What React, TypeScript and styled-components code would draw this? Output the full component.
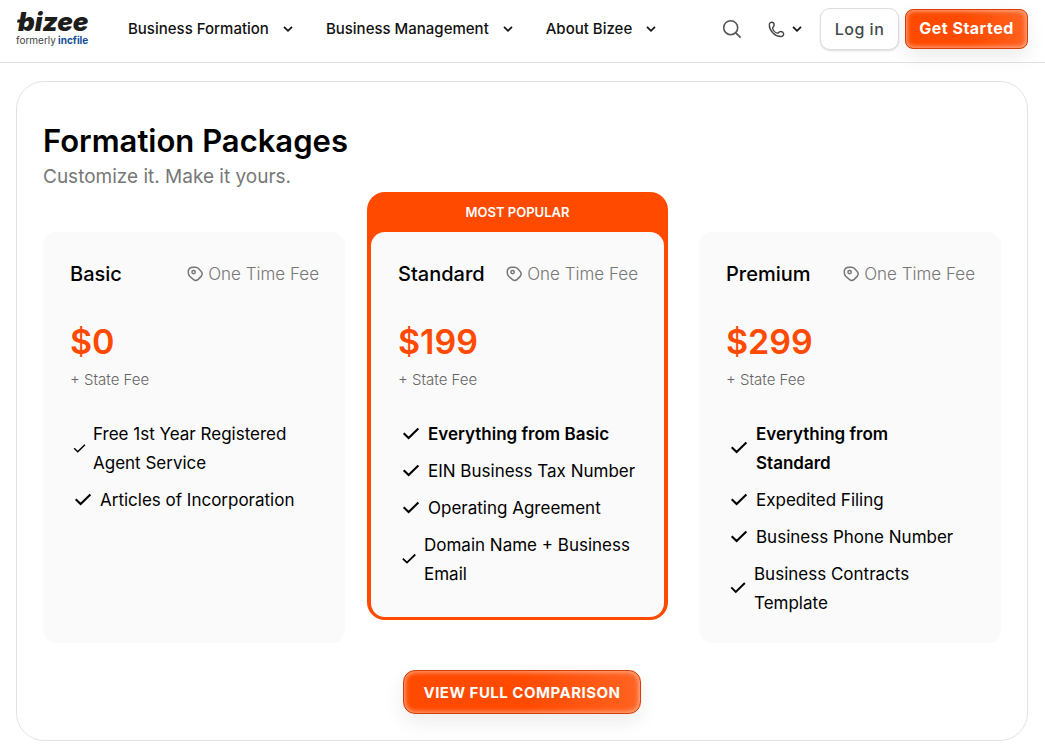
import React from "react";
import styled, { createGlobalStyle, css } from "styled-components";

const GlobalStyle = createGlobalStyle`
  * { box-sizing: border-box; }
  body {
    margin: 0;
    background: #fff;
    color: #000;
    font-family: Inter, "Liberation Sans", sans-serif;
  }
  button { font-family: inherit; cursor: pointer; }
  h1, h2, p, ul { margin: 0; padding: 0; }
`;

const Header = styled.header`
  display: flex;
  align-items: center;
  height: 63px;
  padding: 0 17px 4px 16px;
  border-bottom: 1px solid #e2e4e4;
`;

const LogoLink = styled.a`
  display: block;
  height: 40px;
  margin-right: 32px;
`;

const Nav = styled.nav`
  display: flex;
  gap: 33px;
  flex: 1;
`;

const NavButton = styled.button`
  display: flex;
  align-items: center;
  gap: 14px;
  padding: 0;
  border: 0;
  background: none;
  color: #111;
  font-size: 15px;
  font-weight: 500;
  line-height: 20px;
  white-space: nowrap;
`;

const Tools = styled.div`
  display: flex;
  align-items: center;
`;

const IconButton = styled.button<{ $gap: number }>`
  display: flex;
  align-items: center;
  gap: 7px;
  margin-right: ${(p) => p.$gap}px;
  padding: 0;
  border: 0;
  background: none;
  color: #444;
`;

const LoginButton = styled.button`
  width: 79px;
  height: 42px;
  margin-right: 6px;
  padding: 0;
  border: 1px solid #dcdfdf;
  border-radius: 10px;
  background: #fff;
  box-shadow: 0 1px 2px rgba(0, 0, 0, 0.15);
  color: #434a4a;
  font-size: 16px;
  font-weight: 500;
  letter-spacing: 0.5px;
`;

const PrimaryButton = styled.button<{ $large?: boolean }>`
  border: 1px solid #d63e05;
  border-radius: 8px;
  background: linear-gradient(75deg, #ff4a00 50%, #ff6424 100%);
  box-shadow:
    inset 0 0 5px 1px rgba(255, 255, 255, 0.55),
    0 8px 20px rgba(0, 0, 0, 0.08);
  color: #fff;
  font-weight: 700;
  letter-spacing: 0.5px;
  white-space: nowrap;
  ${(p) =>
    p.$large
      ? css`
          width: 238px;
          height: 44px;
          padding: 0;
          border-radius: 12px;
          font-size: 15px;
        `
      : css`
          width: 123px;
          height: 40px;
          padding: 0 0 2px;
          font-size: 16px;
        `}
`;

const Panel = styled.main`
  margin: 18px 17px 14px 16px;
  padding: 41px 26px 26px;
  border: 1px solid #e2e4e4;
  border-radius: 28px;
`;

const Title = styled.h1`
  font-size: 31px;
  font-weight: 600;
  line-height: 36px;
`;

const Subtitle = styled.p`
  color: #777;
  font-size: 19px;
  line-height: 36px;
`;

const Plans = styled.div`
  display: grid;
  grid-template-columns: repeat(3, minmax(0, 1fr));
  gap: 26px;
  margin-top: 37px;
`;

const Plan = styled.section<{ $featured?: boolean }>`
  ${(p) =>
    p.$featured
      ? css`
          align-self: start;
          margin: -40px 5px 0 -4px;
          padding: 0 4px 3px;
          border-radius: 18px;
          background: #ff4a00;
        `
      : css`
          border-radius: 14px;
          background: #fafafa;
        `}
`;

const Ribbon = styled.p`
  color: #fff;
  font-size: 13px;
  font-weight: 600;
  line-height: 40px;
  text-align: center;
`;

const PlanBody = styled.div<{ $featured?: boolean }>`
  padding: 26px 26px ${(p) => (p.$featured ? 28 : 25)}px 27px;
  border-radius: 14px;
  background: #fafafa;
`;

const PlanHead = styled.div`
  display: flex;
  align-items: center;
  justify-content: space-between;
`;

const PlanName = styled.h2`
  font-size: 20px;
  font-weight: 500;
  line-height: 30px;
`;

const Fee = styled.p`
  display: flex;
  align-items: center;
  gap: 5px;
  color: #777;
  font-size: 17px;
  font-weight: 300;
  line-height: 32px;
  white-space: nowrap;
`;

const Price = styled.p`
  margin-top: 32px;
  color: #ff4a00;
  font-size: 34px;
  font-weight: 600;
  line-height: 40px;
`;

const StateFee = styled.p`
  margin-top: 6px;
  color: #666;
  font-size: 15px;
  font-weight: 300;
  line-height: 24px;
`;

const Features = styled.ul`
  display: flex;
  flex-direction: column;
  gap: 8px;
  max-width: 238px;
  margin-top: 28px;
  list-style: none;
`;

const Feature = styled.li<{ $bold?: boolean }>`
  display: flex;
  align-items: center;
  gap: 4px;
  font-size: 17px;
  font-weight: ${(p) => (p.$bold ? 600 : 400)};
  line-height: 29px;

  svg { flex: none; }
`;

const Actions = styled.div`
  display: flex;
  justify-content: center;
  margin-top: 27px;
`;

const Chevron = () => (
  <svg width="10" height="8" viewBox="0 0 10 8" fill="none" aria-hidden="true">
    <path d="M1 1.800l4 4 4-4" stroke="#111" strokeWidth="1.700" />
  </svg>
);

const SearchIcon = () => (
  <svg width="20" height="20" viewBox="0 0 20 20" fill="none" aria-hidden="true">
    <circle cx="8.7" cy="8.7" r="7" stroke="#555" strokeWidth="1.6" />
    <path d="M13.8 13.8l4.8 4.8" stroke="#555" strokeWidth="1.7" />
  </svg>
);

const PhoneIcon = () => (
  <svg width="17" height="17" viewBox="0 0 17 17" fill="none" aria-hidden="true">
    <path
      d="M1.4 3.2C1.6 1.8 3 1 4.2 1.3c1.3.3 2 2 1.9 3.3C6 5.7 4.5 6.1 4.7 7.3c.3 2 2.5 4.300 4.600 4.800 1.200.3 1.500-1.300 2.700-1.500 1.500-.2 3.300.7 3.600 2 .3 1.500-.8 2.700-2.200 2.900C7.500 16.200 .8 9.400 1.400 3.200z"
      stroke="#444"
      strokeWidth="1.4"
    />
  </svg>
);

const TagIcon = () => (
  <svg width="16" height="16" viewBox="0 0 16 16" fill="none" aria-hidden="true">
    <path
      d="M1.200 5.800C1.200 2.800 3.200 1.200 6 1.200h2.400c1.300 0 2.200.4 3.100 1.300l2.500 2.700c1.500 1.600 1.500 3.400.2 5.200l-3 3c-1.500 1.400-3.300 1.300-4.900 0L2.700 10.200C1.600 9.100 1.200 7.800 1.200 5.800z"
      stroke="#777"
      strokeWidth="1.5"
    />
    <circle cx="6.600" cy="6.100" r="1.700" stroke="#777" strokeWidth="1.5" />
  </svg>
);

const CheckIcon = ({ size }: { size: number }) => (
  <svg width={size} height={size} viewBox="0 0 26 26" fill="none" aria-hidden="true">
    <path d="M5.700 11.300l4.900 4.800L20.400 6.500" stroke="#000" strokeWidth="2.100" />
  </svg>
);

const Logo = () => (
  <svg width="80" height="40" viewBox="0 0 80 40" role="img" aria-label="bizee, formerly incfile">
    <text x="2" y="22" fontFamily="Inter, sans-serif" fontSize="26" fontWeight="900" fontStyle="italic" fill="#1d1d1b">
      bizee
    </text>
    <path d="M1.600 10.500h6l-.6 3H1z" fill="#1d1d1b" />
    <text x="0" y="35" fontFamily="Inter, sans-serif" fontSize="10" fill="#444">
      formerly
    </text>
    <text x="42" y="35" fontFamily="Inter, sans-serif" fontSize="10" fontWeight="700" fill="#124f97">
      incfile
    </text>
  </svg>
);

type FeatureItem = { text: string; bold?: boolean; check?: number };
type PlanData = { name: string; price: string; featured?: boolean; features: FeatureItem[] };

const plans: PlanData[] = [
  {
    name: "Basic",
    price: "$0",
    features: [
      { text: "Free 1st Year Registered Agent Service", check: 19 },
      { text: "Articles of Incorporation" },
    ],
  },
  {
    name: "Standard",
    price: "$199",
    featured: true,
    features: [
      { text: "Everything from Basic", bold: true },
      { text: "EIN Business Tax Number" },
      { text: "Operating Agreement" },
      { text: "Domain Name + Business Email", check: 22 },
    ],
  },
  {
    name: "Premium",
    price: "$299",
    features: [
      { text: "Everything from Standard", bold: true },
      { text: "Expedited Filing" },
      { text: "Business Phone Number" },
      { text: "Business Contracts Template", check: 24 },
    ],
  },
];

const menu = ["Business Formation", "Business Management", "About Bizee"];

export default function App() {
  return (
    <>
      <GlobalStyle />
      <Header>
        <LogoLink href="#">
          <Logo />
        </LogoLink>
        <Nav>
          {menu.map((label) => (
            <NavButton key={label} type="button">
              {label}
              <Chevron />
            </NavButton>
          ))}
        </Nav>
        <Tools>
          <IconButton $gap={26} type="button" aria-label="Search">
            <SearchIcon />
          </IconButton>
          <IconButton $gap={18} type="button" aria-label="Call us">
            <PhoneIcon />
            <Chevron />
          </IconButton>
          <LoginButton type="button">Log in</LoginButton>
          <PrimaryButton type="button">Get Started</PrimaryButton>
        </Tools>
      </Header>
      <Panel>
        <Title>Formation Packages</Title>
        <Subtitle>Customize it. Make it yours.</Subtitle>
        <Plans>
          {plans.map((plan) => (
            <Plan key={plan.name} $featured={plan.featured}>
              {plan.featured && <Ribbon>MOST POPULAR</Ribbon>}
              <PlanBody $featured={plan.featured}>
                <PlanHead>
                  <PlanName>{plan.name}</PlanName>
                  <Fee>
                    <TagIcon />
                    One Time Fee
                  </Fee>
                </PlanHead>
                <Price>{plan.price}</Price>
                <StateFee>+ State Fee</StateFee>
                <Features>
                  {plan.features.map((f) => (
                    <Feature key={f.text} $bold={f.bold}>
                      <CheckIcon size={f.check ?? 26} />
                      <span>{f.text}</span>
                    </Feature>
                  ))}
                </Features>
              </PlanBody>
            </Plan>
          ))}
        </Plans>
        <Actions>
          <PrimaryButton $large type="button">
            VIEW FULL COMPARISON
          </PrimaryButton>
        </Actions>
      </Panel>
    </>
  );
}
